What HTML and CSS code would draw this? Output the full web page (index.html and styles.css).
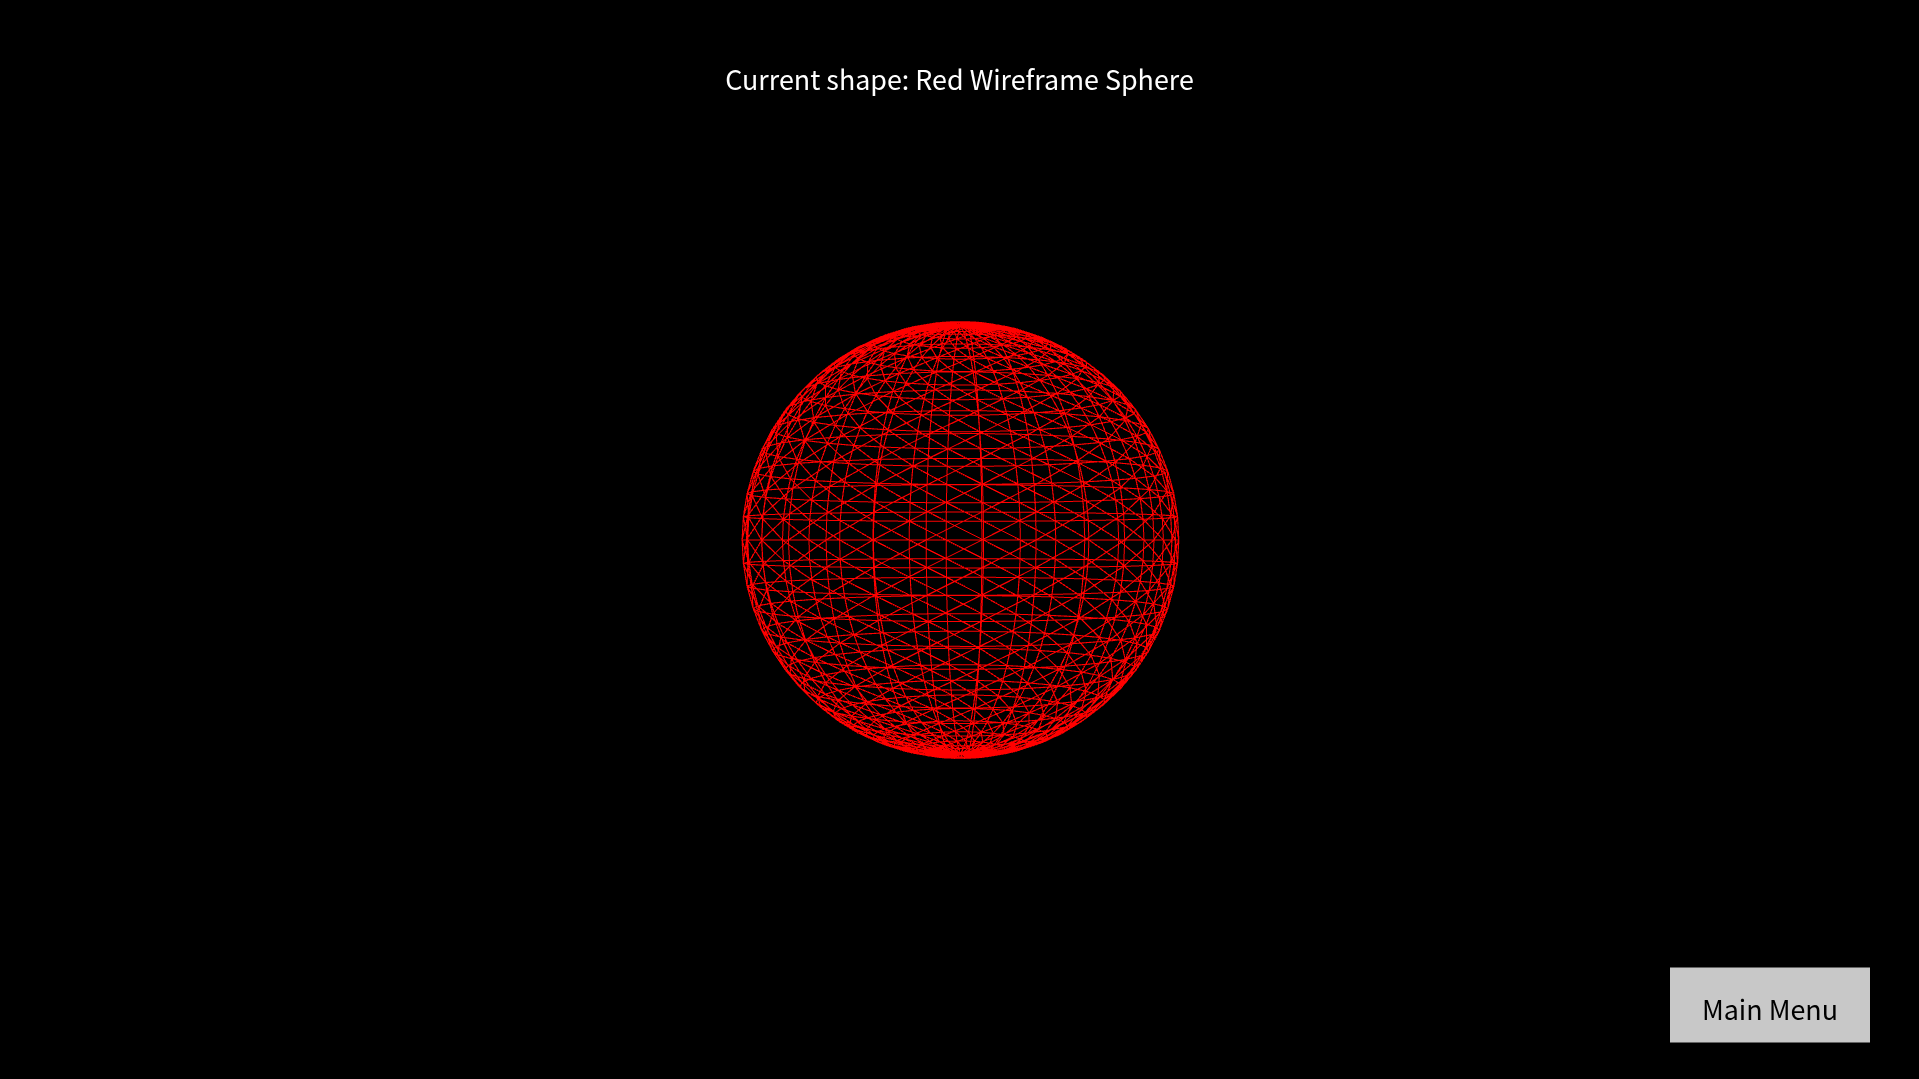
FILE: index.html
```html
<!DOCTYPE html>
<html lang="en">

<head>
    <meta charset="UTF-8">
    <meta name="viewport" content="width=device-width, initial-scale=1.0">
    <title>Shapes</title>
    <link rel="stylesheet" href="styles.css">
</head>

<body>
    <canvas class="scene" id="scene" width="1919" height="1079"></canvas>
    <div class="hud">
        <div class="shape_label">Current shape: Red Wireframe Sphere</div>
        <button type="button" class="menu_btn">Main Menu</button>
    </div>
    <script src="sphere.js"></script>
</body>

</html>
```

FILE: styles.css
```css
html,
body {
    margin: 0;
    height: 100%;
    background-color: #000;
    overflow: hidden;
}

.scene {
    position: absolute;
    left: 0;
    top: 0;
    display: block;
}

.hud {
    position: relative;
    height: 100%;
    display: flex;
    flex-direction: column;
    justify-content: space-between;
    font-family: "Noto Sans CJK JP", "Noto Sans", sans-serif;
}

.shape_label {
    padding-top: 59px;
    text-align: center;
    font-size: 26.87px;
    line-height: 40px;
    color: #fff;
}

.menu_btn {
    align-self: flex-end;
    box-sizing: border-box;
    width: 200px;
    height: 76px;
    margin: 0 49px 36px 0;
    padding: 7px 0 0;
    border: 0;
    border-top: 1px solid #646464;
    border-bottom: 1px solid #646464;
    border-radius: 0;
    background-color: #c8c8c8;
    color: #000;
    font-family: inherit;
    font-size: 26.87px;
}
```

FILE: sphere.js
```js
// wireframe sphere, 30 x 30 segments
var canvas = document.getElementById("scene");
var ctx = canvas.getContext("2d");
var W = canvas.width, H = canvas.height;

var SEGMENTS = 30;
var CAM_DIST = 5;
var FOCAL = 1070;
var CX = 960.5, CY = 540;
var SPIN = 0.185;

// 4x multisample positions, the hard stepped look of GL lines
var SAMPLES = [[0.375, 0.125], [0.875, 0.375], [0.125, 0.625], [0.625, 0.875]];
var mask = new Uint8Array(W * H);

function project(ix, iy) {
    var phi = ix / SEGMENTS * Math.PI * 2 + SPIN;
    var theta = iy / SEGMENTS * Math.PI;
    var x = -Math.cos(phi) * Math.sin(theta);
    var y = Math.cos(theta);
    var z = Math.sin(phi) * Math.sin(theta);
    var s = FOCAL / (CAM_DIST - z);
    return [CX + x * s, CY - y * s];
}

function line(a, b) {
    var dx = b[0] - a[0], dy = b[1] - a[1];
    var len2 = dx * dx + dy * dy;
    var len = Math.sqrt(len2);
    // flat and upright lines stay 1px, slanted ones read a bit brighter
    var slant = Math.min(Math.abs(dx), Math.abs(dy)) / len;
    var half = slant < 0.05 ? 0.5 : 0.56;
    var x0 = Math.floor(Math.min(a[0], b[0]) - 1), x1 = Math.ceil(Math.max(a[0], b[0]) + 1);
    var y0 = Math.floor(Math.min(a[1], b[1]) - 1), y1 = Math.ceil(Math.max(a[1], b[1]) + 1);
    for (var py = y0; py <= y1; py++) {
        for (var px = x0; px <= x1; px++) {
            for (var i = 0; i < 4; i++) {
                var sx = px + SAMPLES[i][0] - a[0], sy = py + SAMPLES[i][1] - a[1];
                var t = (sx * dx + sy * dy) / len2;
                if (t >= 0 && t <= 1 && Math.abs(sx * dy - sy * dx) / len <= half) {
                    mask[py * W + px] |= 1 << i;
                }
            }
        }
    }
}

for (var iy = 0; iy < SEGMENTS; iy++) {
    for (var ix = 0; ix < SEGMENTS; ix++) {
        var b = project(ix, iy);
        var a = project(ix + 1, iy);
        var c = project(ix, iy + 1);
        line(b, c); // meridian
        if (iy > 0) line(b, a); // latitude
        if (iy > 0 && iy < SEGMENTS - 1) line(a, c); // diagonal
    }
}

var img = ctx.createImageData(W, H);
for (var p = 0; p < mask.length; p++) {
    var m = mask[p];
    var bits = (m & 1) + (m >> 1 & 1) + (m >> 2 & 1) + (m >> 3 & 1);
    img.data[p * 4] = bits * 255 / 4;
    img.data[p * 4 + 3] = 255;
}
ctx.putImageData(img, 0, 0);
```
